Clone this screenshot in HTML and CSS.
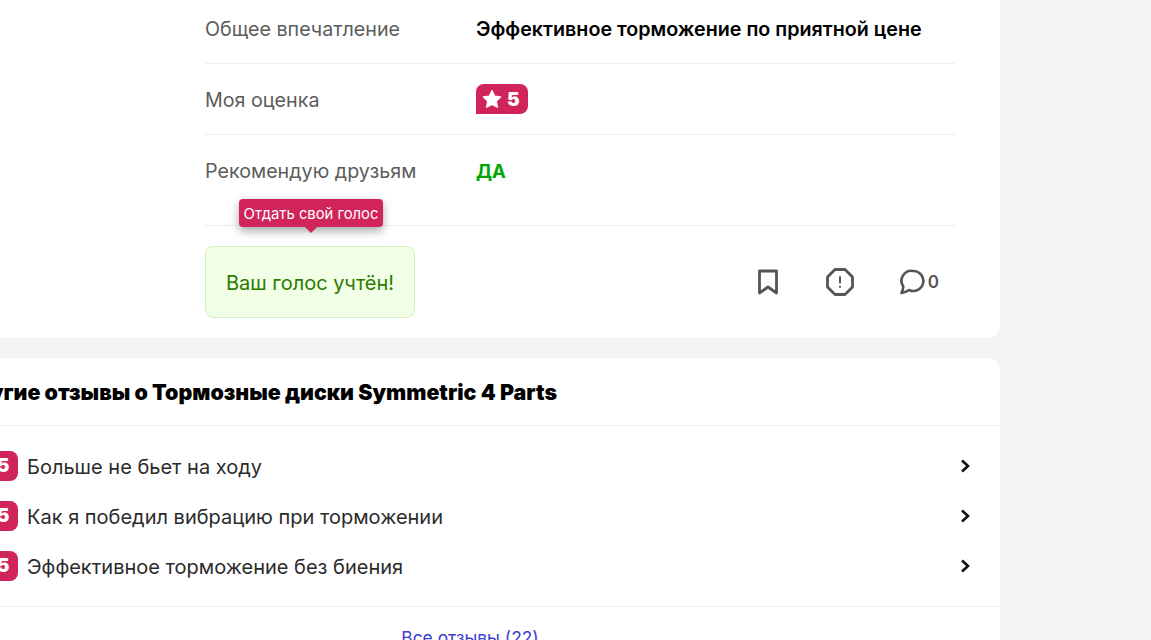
FILE: index.html
```html
<!DOCTYPE html>
<html lang="ru">
<head>
    <meta charset="UTF-8">
    <meta name="viewport" content="width=device-width, initial-scale=1.0">
    <title>Отзыв</title>
    <link rel="stylesheet" href="styles.css">
</head>
<body>
    <div class="page">
        <section class="card review">
            <div class="review-body">
                <div class="row">
                    <div class="row-label">Общее впечатление</div>
                    <div class="row-value strong">Эффективное торможение по приятной цене</div>
                </div>
                <div class="row">
                    <div class="row-label">Моя оценка</div>
                    <div class="row-value">
                        <span class="rating">
                            <svg class="star" viewBox="0 0 24 24" width="20" height="20"><path d="M12 1.8l3.2 6.7 7.3 1-5.3 5.1 1.3 7.3-6.5-3.5-6.5 3.5 1.3-7.3L1.500 9.500l7.300-1z" fill="#fff" stroke="#fff" stroke-width="1.500" stroke-linejoin="round"/></svg>
                            5
                        </span>
                    </div>
                </div>
                <div class="row row-last">
                    <div class="row-label">Рекомендую друзьям</div>
                    <div class="row-value yes">ДА</div>
                </div>
                <div class="actions">
                    <div class="vote">
                        <div class="tooltip">Отдать свой голос</div>
                        <div class="vote-box">Ваш голос учтён!</div>
                    </div>
                    <div class="icons">
                        <a class="icon-btn">
                            <svg viewBox="0 0 24 28" width="24" height="28" fill="none" stroke="#555" stroke-width="2.800" stroke-linejoin="round"><path d="M3.500 3h17v22l-8.500-6-8.500 6z"/></svg>
                        </a>
                        <a class="icon-btn">
                            <svg viewBox="0 0 30 30" width="30" height="30" fill="none" stroke="#555" stroke-width="2.800" stroke-linejoin="round"><path d="M10 2.500h10l7.500 7.500v10L20 27.500H10L2.500 20V10z"/><path d="M15 10v5.500" stroke-width="2" stroke-linecap="round"/><circle cx="15" cy="19.800" r="1.100" fill="#555" stroke="none"/></svg>
                        </a>
                        <a class="icon-btn comment">
                            <svg viewBox="0 0 28 28" width="28" height="28" fill="none" stroke="#555" stroke-width="2.600" stroke-linejoin="round"><path d="M15.500 3a10 10 0 1 1-4.500 19c-2 1.500-4.500 2.600-7.500 3 1-2 1.800-4.500 1.800-6.500A10 10 0 0 1 15.500 3z"/></svg>
                            <span>0</span>
                        </a>
                    </div>
                </div>
            </div>
        </section>

        <section class="card others">
            <h2 class="others-title">Другие отзывы о Тормозные диски Symmetric 4 Parts</h2>
            <ul class="others-list">
                <li class="others-item">
                    <span class="mini-rating">5</span>
                    <span class="others-text">Больше не бьет на ходу</span>
                    <svg class="chevron" viewBox="0 0 12 16" width="12" height="16" fill="none" stroke="#111" stroke-width="2.600"><path d="M3 2.500L9 8l-6 5.500"/></svg>
                </li>
                <li class="others-item">
                    <span class="mini-rating">5</span>
                    <span class="others-text">Как я победил вибрацию при торможении</span>
                    <svg class="chevron" viewBox="0 0 12 16" width="12" height="16" fill="none" stroke="#111" stroke-width="2.600"><path d="M3 2.500L9 8l-6 5.500"/></svg>
                </li>
                <li class="others-item">
                    <span class="mini-rating">5</span>
                    <span class="others-text">Эффективное торможение без биения</span>
                    <svg class="chevron" viewBox="0 0 12 16" width="12" height="16" fill="none" stroke="#111" stroke-width="2.600"><path d="M3 2.500L9 8l-6 5.500"/></svg>
                </li>
            </ul>
            <div class="others-footer"><a class="all-link">Все отзывы (22)</a></div>
        </section>
    </div>
</body>
</html>
```

FILE: styles.css
```css
html, body {
    height: 100%;
}
body {
    margin: 0;
    width: 1151px;
    height: 640px;
    overflow: hidden;
    background: #f3f3f6;
    font-family: "Inter", "Noto Sans", sans-serif;
    color: #222;
}
.page {
    width: 1060px;
    margin: -37px 0 0 -60px;
}
.card {
    background: #fff;
    border-radius: 12px;
    margin-bottom: 20px;
}
.review-body {
    width: 750px;
    margin-left: 265px;
    padding-top: 30px;
    padding-bottom: 20px;
}
.row {
    display: flex;
    align-items: center;
    height: 70px;
    border-bottom: 1px solid #eee;
    font-size: 19.7px;
}
.row-label,
.row-value.strong {
    padding-top: 2px;
}
.row-last {
    height: 90px;
    align-items: flex-start;
    line-height: 72px;
}
.row-last .row-label {
    padding-top: 0;
}
.row-label {
    width: 271px;
    color: #5c5c5c;
}
.row-value.strong {
    font-weight: 600;
    color: #000;
}
.row-value.yes {
    font-size: 18.5px;
    font-weight: 700;
    color: #00a800;
}
.rating {
    display: inline-flex;
    align-items: center;
    gap: 5px;
    height: 30px;
    padding: 0 8px 0 6px;
    background: #d0245a;
    border-radius: 8px 8px 8px 0;
    color: #fff;
    font-weight: 900;
    font-size: 19px;
}
.actions {
    display: flex;
    justify-content: space-between;
    align-items: center;
    padding-top: 20px;
}
.vote {
    position: relative;
}
.vote-box {
    width: 210px;
    height: 72px;
    box-sizing: border-box;
    display: flex;
    align-items: center;
    justify-content: center;
    padding-top: 2px;
    background: #f0ffe6;
    border: 1px solid #d5efc0;
    border-radius: 8px;
    color: #2f7a00;
    font-size: 20px;
}
.tooltip {
    position: absolute;
    left: 34px;
    top: -47px;
    width: 144px;
    height: 28px;
    line-height: 30px;
    text-align: center;
    background: #d0245a;
    color: #fff;
    font-size: 14.8px;
    border-radius: 4px;
    box-shadow: 0 4px 10px rgba(0,0,0,0.35);
    white-space: nowrap;
}
.tooltip::after {
    content: "";
    position: absolute;
    left: 66px;
    top: 28px;
    border-left: 6px solid transparent;
    border-right: 6px solid transparent;
    border-top: 6px solid #d0245a;
}
.icons {
    display: flex;
    align-items: center;
    gap: 42px;
    padding-right: 16px;
}
.icon-btn {
    display: flex;
    align-items: center;
    width: 30px;
    justify-content: center;
}
.icon-btn.comment {
    width: auto;
    margin-left: 1px;
    gap: 2px;
    color: #555;
    font-size: 17px;
    font-weight: 600;
}
.others-title {
    margin: 0;
    height: 67px;
    line-height: 68px;
    padding-left: 17px;
    border-bottom: 1px solid #eee;
    font-size: 21.4px;
    font-weight: 900;
    color: #000;
    white-space: nowrap;
}
.others-list {
    list-style: none;
    margin: 0;
    padding: 15px 0;
    border-bottom: 1px solid #eee;
}
.others-item {
    display: flex;
    align-items: center;
    height: 50px;
    padding-left: 48px;
    padding-right: 29px;
}
.mini-rating {
    width: 30px;
    height: 30px;
    line-height: 30px;
    text-align: center;
    background: #d0245a;
    color: #fff;
    font-weight: 900;
    font-size: 19px;
    border-radius: 8px 8px 8px 0;
    margin-right: 9px;
}
.others-text {
    flex: 1;
    padding-top: 2px;
    font-size: 20px;
    color: #2b2b2b;
}
.others-footer {
    text-align: center;
    padding-top: 20px;
}
.all-link {
    color: #4040d0;
    font-size: 17.4px;
}
```
